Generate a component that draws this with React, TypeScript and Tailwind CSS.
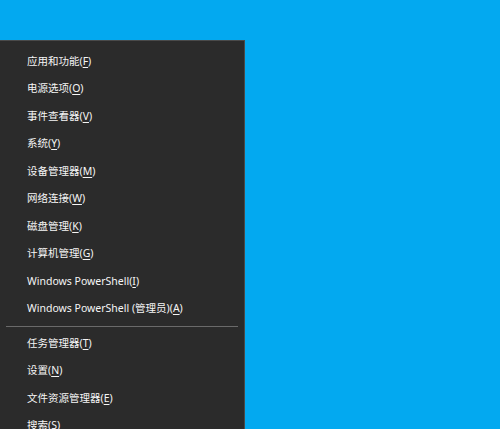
const GROUP_A: [string, string][] = [
  ["应用和功能", "F"],
  ["电源选项", "O"],
  ["事件查看器", "V"],
  ["系统", "Y"],
  ["设备管理器", "M"],
  ["网络连接", "W"],
  ["磁盘管理", "K"],
  ["计算机管理", "G"],
  ["Windows PowerShell", "I"],
  ["Windows PowerShell (管理员)", "A"],
];

const GROUP_B: [string, string][] = [
  ["任务管理器", "T"],
  ["设置", "N"],
  ["文件资源管理器", "E"],
  ["搜索", "S"],
];

function Item({ label, hotkey }: { label: string; hotkey: string }) {
  return (
    <div className="flex h-[27.5px] items-center pl-[27px] text-[10.5px] text-[#f5f5f5]">
      {label}(<span className="underline underline-offset-2">{hotkey}</span>)
    </div>
  );
}

export default function App() {
  return (
    <div className="h-[429px] w-[500px] overflow-hidden bg-[#03a9f0] pt-[40px] font-['Noto_Sans','Noto_Sans_CJK_SC',sans-serif]">
      <div className="h-[400px] w-[245px] border-t border-r border-[#4a4a4a] bg-[#2b2b2b] pt-[7px]">
        {GROUP_A.map(([l, k]) => (
          <Item key={l} label={l} hotkey={k} />
        ))}
        <div className="flex h-[7px] items-center px-[6px]">
          <div className="h-px w-full bg-[#6a6a6a]" />
        </div>
        {GROUP_B.map(([l, k]) => (
          <Item key={l} label={l} hotkey={k} />
        ))}
      </div>
    </div>
  );
}
